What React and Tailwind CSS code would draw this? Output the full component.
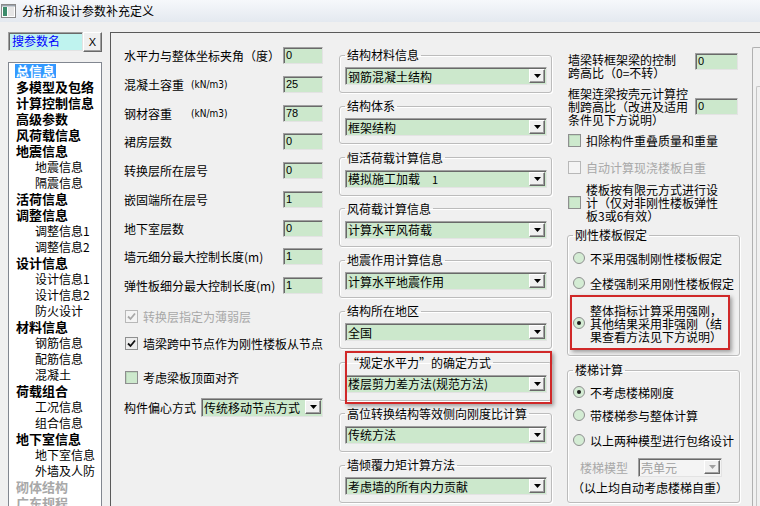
import React from "react";

const sunken =
  "border border-t-[#a0a0a0] border-l-[#a0a0a0] border-r-[#e3e3e3] border-b-[#e3e3e3] shadow-[inset_1px_1px_0_#696969]";
const raised =
  "border border-t-white border-l-white border-r-[#696969] border-b-[#696969] shadow-[inset_-1px_-1px_0_#a0a0a0]";

// tree items: [text, level, state]
const TREE = [
  ["总信息", 0, "sel"],
  ["多模型及包络", 0],
  ["计算控制信息", 0],
  ["高级参数", 0],
  ["风荷载信息", 0],
  ["地震信息", 0],
  ["地震信息", 1],
  ["隔震信息", 1],
  ["活荷信息", 0],
  ["调整信息", 0],
  ["调整信息1", 1],
  ["调整信息2", 1],
  ["设计信息", 0],
  ["设计信息1", 1],
  ["设计信息2", 1],
  ["防火设计", 1],
  ["材料信息", 0],
  ["钢筋信息", 1],
  ["配筋信息", 1],
  ["混凝土", 1],
  ["荷载组合", 0],
  ["工况信息", 1],
  ["组合信息", 1],
  ["地下室信息", 0],
  ["地下室信息", 1],
  ["外墙及人防", 1],
  ["砌体结构", 0, "dim"],
  ["广东规程", 0, "dim"],
];

const FIELDS = [
  ["水平力与整体坐标夹角（度）", null, "0"],
  ["混凝土容重", "(kN/m3)", "25"],
  ["钢材容重", "(kN/m3)", "78"],
  ["裙房层数", null, "0"],
  ["转换层所在层号", null, "0"],
  ["嵌固端所在层号", null, "1"],
  ["地下室层数", null, "0"],
  ["墙元细分最大控制长度(m)", null, "1"],
  ["弹性板细分最大控制长度(m)", null, "1"],
];

const GROUPS = [
  ["结构材料信息", "钢筋混凝土结构"],
  ["结构体系", "框架结构"],
  ["恒活荷载计算信息", "模拟施工加载", "1"],
  ["风荷载计算信息", "计算水平风荷载"],
  ["地震作用计算信息", "计算水平地震作用"],
  ["结构所在地区", "全国"],
  ["“规定水平力”的确定方式", "楼层剪力差方法(规范方法)", null, true],
  ["高位转换结构等效侧向刚度比计算", "传统方法"],
  ["墙倾覆力矩计算方法", "考虑墙的所有内力贡献"],
];

function Field({ value, className = "" }) {
  return (
    <div
      className={`h-[17px] ${sunken} bg-[#cce8cc] pl-[2px] text-[11px] leading-[14px] font-['Liberation_Sans',sans-serif] ${className}`}
    >
      {value}
    </div>
  );
}

function Drop({ text, extra, disabled, className = "" }) {
  return (
    <div
      className={`flex items-center h-[18px] ${sunken} ${
        disabled ? "bg-[#f4f4f4] text-[#a0a0a0]" : "bg-[#cce8cc]"
      } ${className}`}
    >
      <span className="flex-1 pl-[2px] leading-[15px] whitespace-nowrap">
        {text}
        {extra && <span className="ml-[12px] text-[11px]">{extra}</span>}
      </span>
      <span
        className={`shrink-0 w-[16px] h-[14px] mr-[1px] flex items-center justify-center bg-[#f0f0f0] ${raised}`}
      >
        <svg width="7" height="4" viewBox="0 0 7 4">
          <polygon points="0,0 7,0 3.5,4" fill={disabled ? "#a0a0a0" : "#000"} />
        </svg>
      </span>
    </div>
  );
}

function Check({ checked, disabled, green }) {
  return (
    <span
      className={`shrink-0 w-[13px] h-[13px] border flex items-center justify-center ${
        disabled
          ? "border-[#b8b8b8] bg-[#f4f4f4]"
          : green
          ? "border-[#8e8f8f] bg-[#cde9cd] shadow-[inset_1px_1px_0_#b9d6b9]"
          : "border-[#8e8f8f] bg-[#ececec]"
      }`}
    >
      {checked && (
        <svg width="9" height="9" viewBox="0 0 9 9">
          <polyline
            points="1,4.5 3.5,7 8,1.5"
            fill="none"
            stroke={disabled ? "#a8a8a8" : "#111"}
            strokeWidth="1.8"
          />
        </svg>
      )}
    </span>
  );
}

function Radio({ on, disabled }) {
  return (
    <span
      className={`shrink-0 w-[12px] h-[12px] rounded-full border flex items-center justify-center ${
        disabled ? "border-[#c0c0c0] bg-[#f4f4f4]" : "border-[#8e8f8f] bg-[#d4ecd4]"
      }`}
    >
      {on && <span className="w-[4px] h-[4px] rounded-full bg-[#1a1a1a]" />}
    </span>
  );
}

function Group({ title, children, className = "" }) {
  return (
    <fieldset
      className={`border border-[#bcbcbc] rounded-[3px] shadow-[inset_1px_1px_0_#fff,1px_1px_0_#fff] px-[5px] ${className}`}
    >
      <legend className="px-[2px] leading-[16px] whitespace-nowrap">{title}</legend>
      {children}
    </fieldset>
  );
}

export default function App() {
  return (
    <div className="w-[760px] h-[506px] overflow-hidden bg-[#f0f0f0] text-[12px] text-black font-['Noto_Sans_CJK_SC',sans-serif]">
      {/* title bar */}
      <div className="h-[22px] flex items-center bg-gradient-to-b from-[#f6f8fb] to-[#e4e9f0]">
        <svg width="15" height="14" viewBox="0 0 15 14" className="ml-[1px]">
          <rect x="0.5" y="0.5" width="14" height="13" fill="#fff" stroke="#8a8a8a" />
          <rect x="2" y="3" width="4" height="9" fill="#3c8c6c" />
          <rect x="7" y="3" width="6" height="9" fill="#e6e6e6" />
          <rect x="1" y="1" width="13" height="1.5" fill="#9aa3ad" />
        </svg>
        <span className="ml-[6px] text-[12px] leading-[16px]">分析和设计参数补充定义</span>
      </div>

      <div className="flex pt-[10px] pl-[8px]">
        {/* sidebar */}
        <div className="w-[94px] shrink-0">
          <div className="flex">
            <div
              className={`w-[75px] h-[19px] ${sunken} bg-[#bff3ef] text-[#0000ff] pl-[3px] leading-[16px] text-[12px]`}
            >
              搜参数名
            </div>
            <div
              className={`w-[19px] h-[20px] ${raised} bg-[#f0f0f0] flex items-center justify-center font-['Liberation_Sans',sans-serif] text-[11px]`}
            >
              X
            </div>
          </div>
          <div className="mt-[10px] h-[460px] bg-white border border-[#828790] overflow-hidden">
            {TREE.map(([t, lvl, st], i) => (
              <div
                key={i}
                className={`h-[16px] leading-[16px] whitespace-nowrap ${
                  lvl ? "pl-[26px] text-[12px]" : "pl-[7px] text-[13px] font-bold"
                } ${st === "dim" ? "text-[#a8a8a8]" : ""}`}
              >
                <span
                  className={
                    st === "sel" ? "bg-[#3399ff] text-white px-[1px] -ml-[1px] inline-block leading-[14px]" : ""
                  }
                >
                  {t}
                </span>
              </div>
            ))}
          </div>
        </div>

        {/* main panel */}
        <div className="ml-[8px] flex-1 h-[480px] border-t border-l border-[#5a5a5a] flex pl-[13px]">
          {/* column 1 */}
          <div className="w-[199px] shrink-0 pt-[14px]">
            <div className="flex flex-col gap-[11.75px]">
              {FIELDS.map(([label, unit, v], i) => (
                <div key={i} className="flex items-center justify-between h-[17px]">
                  <span className="flex items-center whitespace-nowrap leading-[15px]">
                    <span className={unit ? "w-[67px]" : ""}>{label}</span>
                    {unit && (
                      <span className="text-[10px] font-['DejaVu_Sans_Condensed','Liberation_Sans',sans-serif]">
                        {unit}
                      </span>
                    )}
                  </span>
                  <Field value={v} className="w-[40px]" />
                </div>
              ))}
            </div>
            <div className="mt-[15.5px] flex items-center h-[13px] ml-[1px] gap-[5px] text-[#a8a8a8]">
              <Check checked disabled />
              <span className="leading-[15px]">转换层指定为薄弱层</span>
            </div>
            <div className="mt-[14px] flex items-center h-[13px] ml-[1px] gap-[5px] whitespace-nowrap">
              <Check checked />
              <span className="leading-[15px]">墙梁跨中节点作为刚性楼板从节点</span>
            </div>
            <div className="mt-[21px] flex items-center h-[13px] ml-[1px] gap-[5px]">
              <Check green />
              <span className="leading-[15px]">考虑梁板顶面对齐</span>
            </div>
            <div className="mt-[14px] flex items-center justify-between">
              <span className="leading-[15px] whitespace-nowrap">构件偏心方式</span>
              <Drop text="传统移动节点方式" className="w-[122px] h-[19px]" />
            </div>
          </div>

          {/* column 2 */}
          <div className="w-[213px] shrink-0 ml-[16px] pt-[14px] flex flex-col gap-[5.25px]">
            {GROUPS.map(([title, val, extra, red], i) => (
              <div key={i} className="relative">
                <Group title={title} className="h-[46px]">
                  <Drop text={val} extra={extra} className="mt-[4px] mr-[-1px]" />
                </Group>
                {red && (
                  <div className="absolute -top-[4px] left-[6px] right-0 -bottom-[3px] border-2 border-[#d02828] shadow-[2px_2px_4px_rgba(0,0,0,0.35)] pointer-events-none" />
                )}
              </div>
            ))}
          </div>

          {/* column 3 */}
          <div className="w-[200px] shrink-0 pl-[15px] pt-[20px]">
            <div className="flex items-start justify-between pr-[14px] ml-[1px]">
              <div className="leading-[13px] w-[118px]">
                墙梁转框架梁的控制
                <br />
                跨高比（0=不转）
              </div>
              <Field value="0" className="w-[43px]" />
            </div>
            <div className="mt-[8px] flex items-center justify-between pr-[14px] ml-[1px]">
              <div className="leading-[13px] w-[124px]">
                框架连梁按壳元计算控
                <br />
                制跨高比（改进及适用
                <br />
                条件见下方说明）
              </div>
              <Field value="0" className="w-[43px]" />
            </div>
            <div className="mt-[7.5px] flex items-center h-[13px] ml-[1px] gap-[5px] whitespace-nowrap">
              <Check green />
              <span className="leading-[15px]">扣除构件重叠质量和重量</span>
            </div>
            <div className="mt-[14px] flex items-center h-[13px] ml-[1px] gap-[5px] text-[#a8a8a8] whitespace-nowrap">
              <Check disabled />
              <span className="leading-[15px]">自动计算现浇楼板自重</span>
            </div>
            <div className="mt-[9px] flex items-center ml-[1px] gap-[5px]">
              <Check green />
              <span className="leading-[13px]">
                楼板按有限元方式进行设
                <br />
                计（仅对非刚性楼板弹性
                <br />
                板3或6有效）
              </span>
            </div>

            <Group title="刚性楼板假定" className="mt-[5.5px] w-[171px] h-[129px]">
              <div className="mt-[8.5px] flex items-center gap-[5px] h-[13px] whitespace-nowrap">
                <Radio />
                <span className="leading-[15px]">不采用强制刚性楼板假定</span>
              </div>
              <div className="mt-[12px] flex items-center gap-[5px] h-[13px] whitespace-nowrap">
                <Radio />
                <span className="leading-[15px]">全楼强制采用刚性楼板假定</span>
              </div>
              <div className="relative mt-[14px] flex items-center gap-[5px]">
                <Radio on />
                <span className="leading-[13px]">
                  整体指标计算采用强刚，
                  <br />
                  其他结果采用非强刚（结
                  <br />
                  果查看方法见下方说明）
                </span>
                <div className="absolute -top-[8.5px] -left-[3px] w-[160px] h-[55px] border-2 border-[#d02828] shadow-[2px_2px_4px_rgba(0,0,0,0.35)] pointer-events-none" />
              </div>
            </Group>

            <Group title="楼梯计算" className="mt-[6px] w-[171px] h-[141px]">
              <div className="mt-[7.5px] flex items-center gap-[5px] h-[13px] whitespace-nowrap">
                <Radio on />
                <span className="leading-[15px]">不考虑楼梯刚度</span>
              </div>
              <div className="mt-[10px] flex items-center gap-[5px] h-[13px] whitespace-nowrap">
                <Radio />
                <span className="leading-[15px]">带楼梯参与整体计算</span>
              </div>
              <div className="mt-[12px] flex items-center gap-[5px] h-[13px] whitespace-nowrap">
                <Radio />
                <span className="leading-[15px]">以上两种模型进行包络设计</span>
              </div>
              <div className="mt-[11px] flex items-center h-[19px]">
                <span className="ml-[7px] w-[58px] text-[#a8a8a8] leading-[15px]">楼梯模型</span>
                <Drop text="壳单元" disabled className="w-[84px] h-[19px]" />
              </div>
              <div className="mt-[3px] leading-[15px] -ml-[1px] whitespace-nowrap">
                （以上均自动考虑楼梯自重）
              </div>
            </Group>
          </div>

          {/* scroll edge */}
          <div className="w-[8px] shrink-0 mt-[14px] border-l border-t border-[#b0b0b0] rounded-tl-[2px]">
            <div className="mt-[38px] ml-[3px] h-[420px] border-l border-t border-[#c4c4c4] rounded-tl-[2px]" />
          </div>
        </div>
      </div>
    </div>
  );
}
